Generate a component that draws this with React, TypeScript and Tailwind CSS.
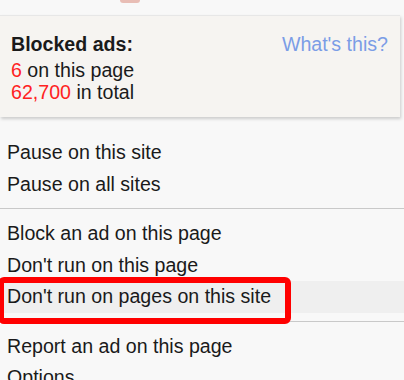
import React from 'react';

type Item = { label: string; active?: boolean };

const GROUPS: Item[][] = [
  [{ label: 'Pause on this site' }, { label: 'Pause on all sites' }],
  [
    { label: 'Block an ad on this page' },
    { label: "Don't run on this page" },
    { label: "Don't run on pages on this site", active: true },
  ],
  [{ label: 'Report an ad on this page' }, { label: 'Options' }],
];

export default function App() {
  return (
    <div className="relative w-[404px] h-[380px] overflow-hidden bg-[#f8f8f8] font-['Liberation_Sans',Arial,sans-serif] text-[19.6px] text-[#1a1a1a]">
      {/* bottom edge of the logo above */}
      <div className="h-[15px] pl-[120px]">
        <div className="w-[20px] h-[3px] rounded-b-sm bg-[#e8bdb5]" />
      </div>

      <div className="w-[400px] bg-[#f6f4f1] border-t border-[#e7e7e7] shadow-[1px_2px_3px_rgba(0,0,0,0.18)] pt-[17px] pb-[14px] pl-[11px] pr-[12px]">
        <div className="flex justify-between leading-[22px]">
          <span className="font-bold">Blocked ads:</span>
          <span className="text-[#7b9de6]">What's this?</span>
        </div>
        <div className="mt-[4px] leading-[22px]">
          <div>
            <span className="text-[#ff2222]">6</span> on this page
          </div>
          <div>
            <span className="text-[#ff2222]">62,700</span> in total
          </div>
        </div>
      </div>

      <div className="mt-[20px]">
        {GROUPS.map((group, gi) => (
          <div key={gi}>
            {gi > 0 && <div className="mt-[8px] mb-[9px] h-px bg-[#c9c9c9]" />}
            {group.map((item) => (
              <div
                key={item.label}
                className={`h-[31.5px] leading-[31.5px] pl-[7px] whitespace-nowrap ${
                  item.active ? 'bg-[#efefef]' : ''
                }`}
              >
                {item.label}
              </div>
            ))}
          </div>
        ))}
      </div>

      {/* annotation box */}
      <div className="absolute left-[-2px] top-[277px] w-[293px] h-[47px] border-[6px] border-[#ff0000] rounded-[6px]" />
    </div>
  );
}
